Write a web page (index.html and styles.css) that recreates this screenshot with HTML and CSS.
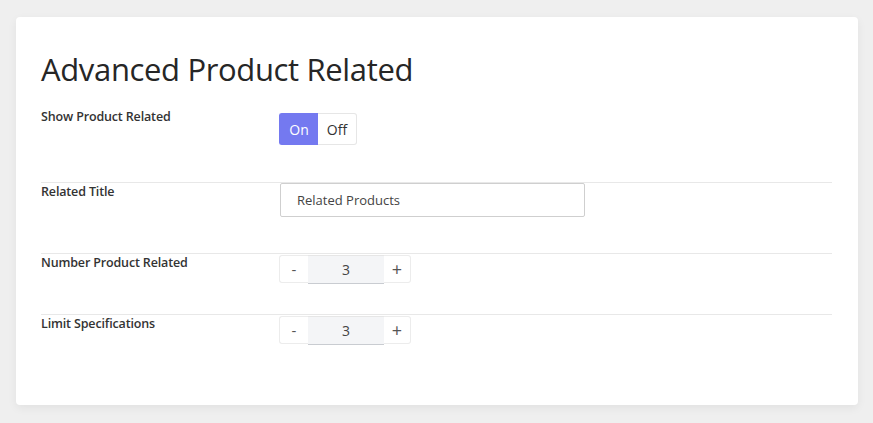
FILE: index.html
```html
<!DOCTYPE html>
<html>
<head>
<meta charset="utf-8">
<link rel="stylesheet" href="styles.css">
</head>
<body>
<div class="card">
  <h1 class="title">Advanced Product Related</h1>
  <div class="row row-first">
    <div class="label">Show Product Related</div>
    <div class="control">
      <div class="toggle">
        <span class="tbtn active">On</span>
        <span class="tbtn">Off</span>
      </div>
    </div>
  </div>
  <div class="row">
    <div class="label">Related Title</div>
    <div class="control">
      <div class="text-input">Related Products</div>
    </div>
  </div>
  <div class="row">
    <div class="label">Number Product Related</div>
    <div class="control">
      <div class="spinner">
        <span class="sbtn minus">-</span>
        <span class="sval">3</span>
        <span class="sbtn plus">+</span>
      </div>
    </div>
  </div>
  <div class="row row-last">
    <div class="label">Limit Specifications</div>
    <div class="control">
      <div class="spinner">
        <span class="sbtn minus">-</span>
        <span class="sval">3</span>
        <span class="sbtn plus">+</span>
      </div>
    </div>
  </div>
</div>
</body>
</html>
```
FILE: styles.css
```css
html, body {
  margin: 0;
  padding: 0;
}
body {
  background: #efefef;
  font-family: "Open Sans", "Noto Sans", sans-serif;
  color: #333;
  padding: 17px 15px 18px 16px;
}
.card {
  background: #fff;
  border-radius: 4px;
  box-shadow: 0 3px 10px rgba(0, 0, 0, 0.06);
  height: 388px;
  box-sizing: border-box;
  padding: 33px 26px 0 25px;
}
.title {
  margin: 0 0 20px 0;
  font-size: 31px;
  line-height: 38px;
  font-weight: 400;
  color: #262626;
  letter-spacing: -0.35px;
}
.row {
  display: flex;
  border-top: 1px solid #e8e8e8;
  padding-bottom: 30px;
}
.row-first {
  border-top: none;
  padding-bottom: 37px;
}
.label {
  width: 238px;
  flex: none;
  font-size: 12.5px;
  line-height: 18px;
  font-weight: 600;
  color: #333;
  letter-spacing: -0.15px;
}
.control {
  flex: none;
}
.toggle {
  display: flex;
  margin-top: 5px;
}
.tbtn {
  width: 39px;
  height: 32px;
  box-sizing: border-box;
  display: flex;
  align-items: center;
  justify-content: center;
  font-size: 14px;
  color: #333;
  border: 1px solid #e6e6e6;
  background: #fff;
}
.tbtn:first-child {
  border-radius: 3px 0 0 3px;
  border-right: none;
}
.tbtn:last-child {
  border-radius: 0 3px 3px 0;
  border-left: none;
}
.tbtn.active {
  background: #7479f0;
  border-color: #7479f0;
  color: #fff;
}
.text-input {
  margin-left: 1px;
  width: 305px;
  height: 34px;
  box-sizing: border-box;
  border: 1px solid #cfcfcf;
  border-radius: 2px;
  padding-left: 16px;
  display: flex;
  align-items: center;
  font-size: 13px;
  color: #444;
  margin-bottom: 6px;
}
.spinner {
  display: flex;
  margin-top: 1px;
  height: 29px;
}
.sbtn {
  box-sizing: border-box;
  height: 28px;
  display: flex;
  align-items: center;
  justify-content: center;
  border: 1px solid #ececec;
  border-radius: 3px;
  background: #fff;
  color: #555;
  font-size: 18px;
  font-weight: 400;
}
.minus {
  width: 29px;
  border-right: none;
  border-radius: 3px 0 0 3px;
  font-size: 15px;
}
.plus {
  width: 27px;
  border-left: none;
  border-radius: 0 3px 3px 0;
}
.sval {
  box-sizing: border-box;
  width: 76px;
  height: 29px;
  background: #f4f5f7;
  border-top: 1px solid #e6e6e6;
  border-bottom: 1px solid #c9ccd1;
  display: flex;
  align-items: center;
  justify-content: center;
  font-size: 14px;
  color: #444;
}
```
